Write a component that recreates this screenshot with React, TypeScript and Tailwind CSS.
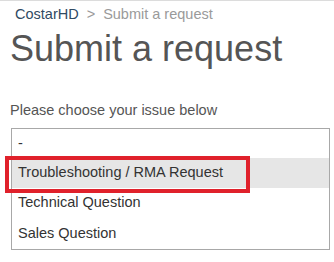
import React from 'react';

const options = ['Troubleshooting / RMA Request', 'Technical Question', 'Sales Question'];

const App: React.FC = () => {
    return (
        <div className="relative w-[334px] h-[262px] overflow-hidden bg-white border-t border-[#dcdcdc] font-['Liberation_Sans',Arial,sans-serif]">
            {/* Breadcrumb */}
            <div className="mt-[6px] pl-[15px] flex items-center text-[14.5px] leading-none">
                <span className="text-[#2f4a63]">CostarHD</span>
                <span className="mx-[8px] text-[#9a9a9a]">&gt;</span>
                <span className="text-[#9a9a9a]">Submit a request</span>
            </div>

            <h1 className="mt-[9px] pl-[10px] text-[36px] leading-none text-[#555555]">Submit a request</h1>

            <p className="mt-[36.5px] pl-[10px] text-[14.5px] leading-none text-[#555555]">Please choose your issue below</p>

            {/* Opened select list */}
            <div className="mt-[10.5px] ml-[11px] w-[319px] border border-[#a8a8a8] bg-white text-[14.5px] text-[#333333]">
                <div className="h-[29px] flex items-center pl-[6px]">-</div>
                <div className="h-[30px] flex items-center pl-[6px] bg-[#e6e6e6]">{options[0]}</div>
                <div className="h-[30px] flex items-center pl-[6px]">{options[1]}</div>
                <div className="h-[31px] flex items-center pl-[6px]">{options[2]}</div>
            </div>

            {/* Red highlight annotation */}
            <div className="absolute left-[5px] top-[155px] w-[245px] h-[37px] border-4 border-[#e0212b]" />
        </div>
    );
};

export default App;
